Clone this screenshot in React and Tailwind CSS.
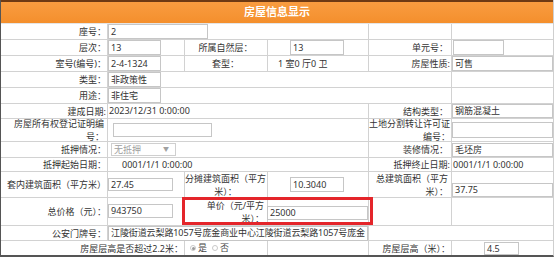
import React from "react";

const B = "border-r border-[#d2d2d2]";

function Inp({ children, className = "" }) {
  return (
    <div className={"border border-[#c6c6c6] bg-white px-[2px] flex items-center overflow-hidden whitespace-nowrap " + className}>
      {children}
    </div>
  );
}

function Row({ h, children, className = "" }) {
  return <div className={"flex border-b border-[#d2d2d2] relative " + h + " " + className}>{children}</div>;
}

function Label({ w, children, align = "right", className = "" }) {
  const a = align === "center" ? "justify-center text-center" : "justify-end text-right";
  return <div className={`${w} ${B} flex items-center ${a} pr-[1px] leading-[13px] shrink-0 ${className}`}>{children}</div>;
}

function Radio({ on }) {
  return (
    <span className="inline-flex items-center justify-center w-[6px] h-[6px] rounded-full border border-[#c9c9c9] bg-white mr-[2px]">
      {on ? <span className="w-[3px] h-[3px] rounded-full bg-[#9a9a9a]" /> : null}
    </span>
  );
}

export default function App() {
  return (
    <div className="w-[554px] h-[257px] overflow-hidden bg-white text-[9px] text-[#333] font-['Noto_Sans','Noto_Sans_CJK_SC',sans-serif]">
      <div className="border-l border-[#555] border-r border-r-[#cfcfcf] border-b-2 border-b-[#555] h-[257px]">
        {/* header */}
        <div className="h-[24px] border-t-2 border-[#6e3a14] bg-gradient-to-b from-[#f99c40] to-[#f48f2c] flex items-center justify-center text-white font-bold text-[11px] border-b border-b-[#e5e5e5]">
          房屋信息显示
        </div>

        {/* r1 */}
        <Row h="h-[16px]">
          <Label w="w-[107px]">座号：</Label>
          <div className={`w-[261px] ${B} flex items-center`}>
            <Inp className="w-[100px] h-[15px]">2</Inp>
          </div>
          <div className={`w-[83px] ${B}`} />
          <div className="flex-1" />
        </Row>

        {/* r2 */}
        <Row h="h-[16px]">
          <Label w="w-[107px]">层次：</Label>
          <div className={`w-[77px] ${B} flex items-center`}>
            <Inp className="w-[53px] h-[15px]">13</Inp>
          </div>
          <Label w="w-[83px]" align="center">所属自然层：</Label>
          <div className={`w-[101px] ${B} flex items-center`}>
            <Inp className="w-[54px] h-[15px] ml-[22px]">13</Inp>
          </div>
          <Label w="w-[83px]" className="pr-[3px]">单元号：</Label>
          <div className="flex-1 flex items-center">
            <Inp className="w-[51px] h-[15px] ml-[1px]"></Inp>
          </div>
        </Row>

        {/* r3 */}
        <Row h="h-[16px]">
          <Label w="w-[107px]">室号(编号)：</Label>
          <div className={`w-[77px] ${B} flex items-center`}>
            <Inp className="w-[53px] h-[15px]">2-4-1324</Inp>
          </div>
          <Label w="w-[83px]" align="center">套型：</Label>
          <div className={`w-[101px] ${B} flex items-end pb-[1px] pl-[10px] whitespace-nowrap`}>
            1 室0 厅0 卫
          </div>
          <Label w="w-[83px]" className="pr-0">房屋性质:</Label>
          <div className="flex-1 flex items-center">
            <Inp className="w-full h-[15px]">可售</Inp>
          </div>
        </Row>

        {/* r4 */}
        <Row h="h-[16px]">
          <Label w="w-[107px]">类型：</Label>
          <div className={`w-[344px] ${B} flex items-center`}>
            <Inp className="w-[53px] h-[15px]">非政策性</Inp>
          </div>
          <div className="flex-1" />
        </Row>

        {/* r5 */}
        <Row h="h-[16px]">
          <Label w="w-[107px]">用途：</Label>
          <div className={`w-[344px] ${B} flex items-center`}>
            <Inp className="w-[53px] h-[15px]">非住宅</Inp>
          </div>
          <div className="flex-1" />
        </Row>

        {/* r6 */}
        <Row h="h-[15px]">
          <Label w="w-[107px]" className="pr-0">建成日期:</Label>
          <div className={`w-[261px] ${B} flex items-center pl-[1px] whitespace-nowrap`}>2023/12/31 0:00:00</div>
          <Label w="w-[83px]" className="pr-[3px]">结构类型：</Label>
          <div className="flex-1 flex items-center">
            <Inp className="w-full h-[14px]">钢筋混凝土</Inp>
          </div>
        </Row>

        {/* r7 */}
        <Row h="h-[23px]">
          <Label w="w-[107px]" className="pr-[3px] leading-[12px]">
            <span>房屋所有权登记证明编<br />号：</span>
          </Label>
          <div className={`w-[261px] ${B} flex items-center`}>
            <Inp className="w-[99px] h-[14px] ml-[5px]"></Inp>
          </div>
          <Label w="w-[83px]" className="pr-0 leading-[12px]">
            <span>土地分割转让许可证<br />编号：</span>
          </Label>
          <div className="flex-1 flex items-center">
            <Inp className="w-full h-[16px]"></Inp>
          </div>
        </Row>

        {/* r8 */}
        <Row h="h-[16px]">
          <Label w="w-[107px]">抵押情况：</Label>
          <div className={`w-[261px] ${B} flex items-center`}>
            <div className="ml-[3px] w-[65px] h-[13px] border border-[#cfcfcf] bg-white flex items-center justify-between px-[2px] text-[#a0a0a0]">
              <span>无抵押</span>
              <span className="text-[6px] mr-[4px]">▼</span>
            </div>
          </div>
          <Label w="w-[83px]" className="pr-[3px]">装修情况：</Label>
          <div className="flex-1 flex items-center">
            <Inp className="w-full h-[14px]">毛坯房</Inp>
          </div>
        </Row>

        {/* r9 */}
        <Row h="h-[14px]">
          <Label w="w-[107px]">抵押起始日期：</Label>
          <div className={`w-[261px] ${B} flex items-center pl-[14px] whitespace-nowrap`}>0001/1/1 0:00:00</div>
          <Label w="w-[83px]" className="pr-0">抵押终止日期:</Label>
          <div className="flex-1 flex items-center pl-[1px] whitespace-nowrap">0001/1/1 0:00:00</div>
        </Row>

        {/* r10 */}
        <Row h="h-[26px]">
          <Label w="w-[107px]" className="pr-0 whitespace-nowrap">套内建筑面积（平方米）</Label>
          <div className={`w-[77px] ${B} flex items-center`}>
            <Inp className="w-[65px] h-[13px]">27.45</Inp>
          </div>
          <Label w="w-[83px]" align="center" className="leading-[13px]">
            <span>分摊建筑面积（平方<br />米）：</span>
          </Label>
          <div className={`w-[101px] ${B} flex items-center`}>
            <Inp className="w-[54px] h-[15px] ml-[22px]">10.3040</Inp>
          </div>
          <Label w="w-[83px]" className="pr-[3px] leading-[13px]">
            <span>总建筑面积（平方<br />米）：</span>
          </Label>
          <div className="flex-1 flex items-end pb-[0px]">
            <Inp className="w-full h-[14px]">37.75</Inp>
          </div>
        </Row>

        {/* r11 */}
        <Row h="h-[28px]">
          <Label w="w-[107px]">总价格（元）：</Label>
          <div className={`w-[77px] ${B} flex items-center`}>
            <Inp className="w-[65px] h-[14px] -mt-[2px]">943750</Inp>
          </div>
          <Label w="w-[83px]" className="pr-[3px] leading-[13px]">
            <span>单价（元/平方<br />米）：</span>
          </Label>
          <div className={`w-[101px] ${B} flex items-center`}>
            <Inp className="w-[101px] h-[14px] -ml-[1px] mt-[2px]">25000</Inp>
          </div>
          <div className={`w-[83px] ${B}`} />
          <div className="flex-1" />
          <div className="absolute left-[181px] -top-[1px] w-[191px] h-[28px] border-[3px] border-[#e4252a] pointer-events-none" />
        </Row>

        {/* r12 */}
        <Row h="h-[15px]">
          <Label w="w-[107px]">公安门牌号：</Label>
          <div className={`w-[261px] ${B} flex items-center`}>
            <Inp className="w-[260px] h-[15px] px-[1px] tracking-[-0.1px]">江陵街道云梨路1057号庞金商业中心江陵街道云梨路1057号庞金</Inp>
          </div>
          <div className="flex-1" />
        </Row>

        {/* r13 */}
        <div className="flex h-[14px]">
          <Label w="w-[184px]">房屋层高是否超过2.2米：</Label>
          <div className={`w-[83px] ${B} flex items-center pl-[5px] text-[#444]`}>
            <Radio on />是
            <span className="w-[5px]" />
            <Radio />否
          </div>
          <div className={`w-[101px] ${B}`} />
          <Label w="w-[83px]" className="pr-0">房屋层高（米）：</Label>
          <div className="flex-1 flex items-end">
            <Inp className="w-[35px] h-[13px] ml-[32px]">4.5</Inp>
          </div>
        </div>
      </div>
    </div>
  );
}
